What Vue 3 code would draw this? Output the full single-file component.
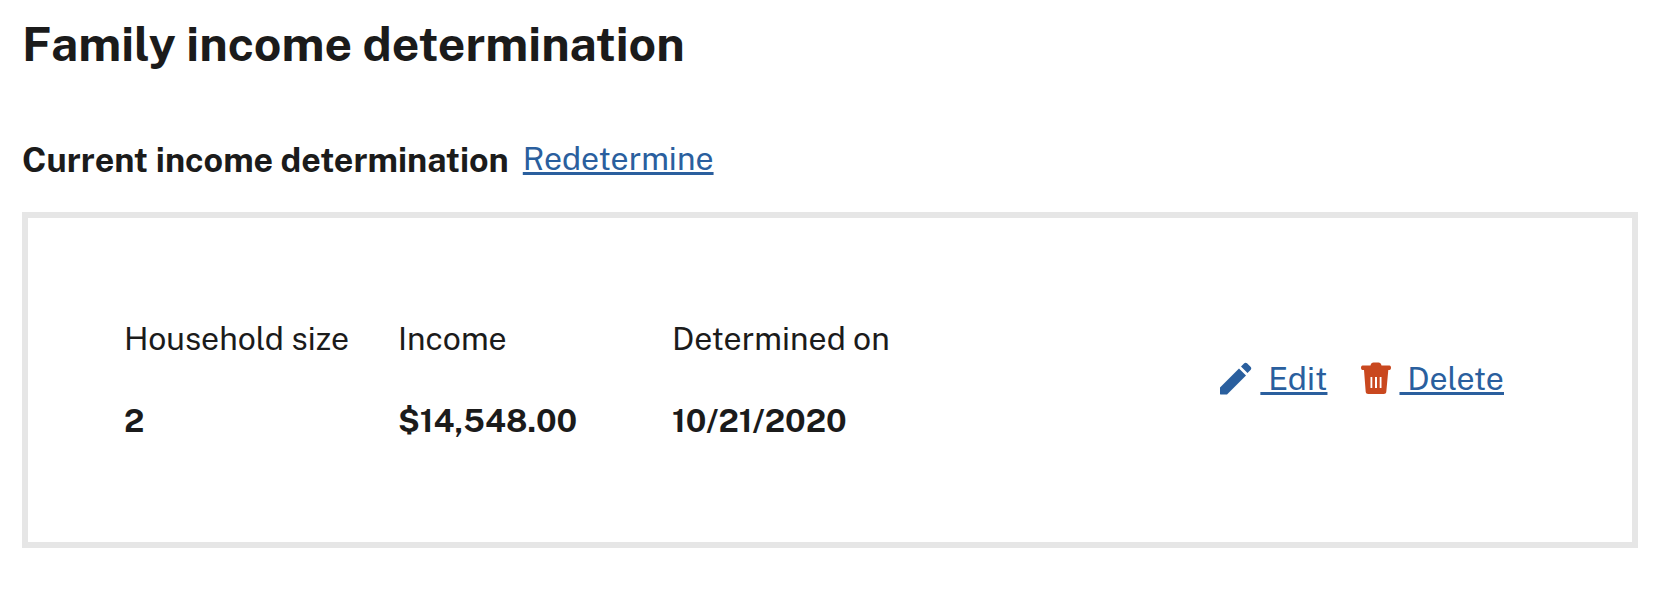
<template>
  <div class="page">
    <h2>Family income determination</h2>
    <div class="current">
      <strong>Current income determination</strong>
      <a href="#" class="link">Redetermine</a>
    </div>
    <div class="card">
      <div class="fields">
        <div v-for="item in items" :key="item.label" class="field">
          <div class="label">{{ item.label }}</div>
          <div class="value">{{ item.value }}</div>
        </div>
      </div>
      <div class="actions">
        <a href="#" class="link action">
          <svg class="icon" viewBox="0 0 32 33" fill="#2a5f9e"><path d="M0 32V25.500L19 6.500L26 13.500L7 32.500H.5C.2 32.500 0 32.300 0 32ZM21 4.500L24 1.500C25 .5 26.300 .5 27.300 1.500L30.500 4.700C31.500 5.700 31.500 7 30.500 8L27.500 11Z"/></svg>
          <span class="text">&nbsp;Edit</span>
        </a>
        <a href="#" class="link action">
          <svg class="icon trash" viewBox="0 0 30 32" fill="#c9481f"><path d="M1.500 3.500H9.500C9.800 1.500 11 .5 12.500 .5H17.500C19 .5 20.200 1.500 20.500 3.500H28.500C29.500 3.500 30 4.600 30 5.700C30 6.900 29.500 8 28.500 8H27.300L25.300 29.800C25.100 31.200 24.200 32 22.800 32H7.200C5.800 32 4.900 31.200 4.700 29.800L3 8H1.500C.5 8 0 6.900 0 5.700C0 4.600 .5 3.500 1.500 3.500ZM9.500 15V26H11.300V15ZM14 15V26H16V15ZM18.700 15V26H20.500V15Z"/></svg>
          <span class="text">&nbsp;Delete</span>
        </a>
      </div>
    </div>
  </div>
</template>

<script setup>
const items = [
  { label: 'Household size', value: '2' },
  { label: 'Income', value: '$14,548.00' },
  { label: 'Determined on', value: '10/21/2020' }
]
</script>

<style>
body {
  background: #fff;
}
</style>

<style scoped>
.page {
  padding: 15px 20px 0 22px;
  width: 1658px;
  box-sizing: border-box;
  font-family: "Public Sans", "Inter", "Liberation Sans", sans-serif;
  color: #1b1b1b;
}

h2 {
  font-size: 48px;
  line-height: 58px;
  font-weight: 700;
  margin: 0 0 65px;
}

.current {
  display: flex;
  align-items: center;
  gap: 14px;
  font-size: 34px;
  line-height: 44px;
  margin-bottom: 30px;
}

.current .link {
  font-size: 32px;
  margin-top: -2px;
}

.link {
  color: #2a5f9e;
}

.card {
  height: 336px;
  box-sizing: border-box;
  border: 6px solid #e6e6e6;
  display: flex;
  align-items: center;
  justify-content: space-between;
  padding: 0 128px 0 96px;
}

.fields {
  display: flex;
}

.field {
  width: 274px;
  font-size: 32px;
  line-height: 40px;
}

.label {
  margin-bottom: 22px;
  padding-bottom: 20px;
}

.value {
  font-weight: 700;
}

.actions {
  display: flex;
  gap: 34px;
  font-size: 32px;
  margin-bottom: 4px;
}

.action {
  display: flex;
  align-items: center;
}

.text {
  margin-left: 8px;
}

.icon {
  width: 32px;
  height: 33px;
}

.trash {
  width: 30px;
  height: 32px;
}
</style>
